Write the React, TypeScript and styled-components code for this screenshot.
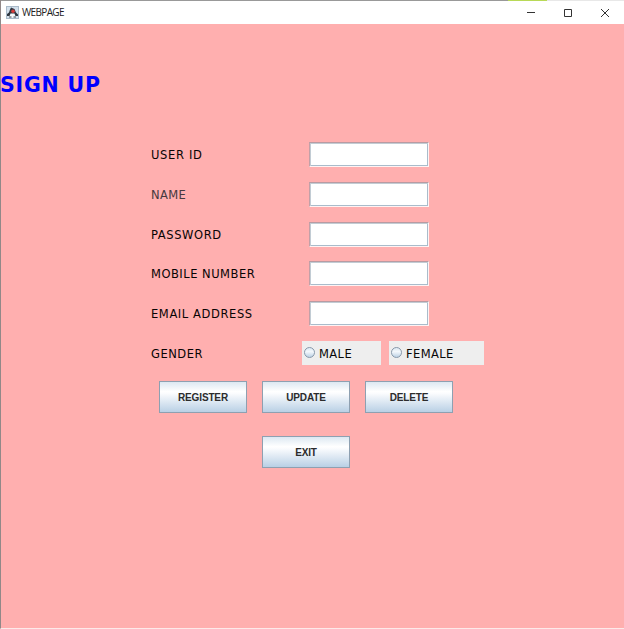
import React from "react";
import styled, { createGlobalStyle } from "styled-components";

const GlobalStyle = createGlobalStyle`
  * { box-sizing: border-box; }
  html, body { margin: 0; padding: 0; overflow: hidden; }
`;

const Window = styled.div`
  display: flex;
  flex-direction: column;
  width: 624px;
  height: 629px;
  border-left: 1px solid #918888;
  border-bottom: 1px solid #fde9e9;
  background: #ffafaf;
`;

const TopEdge = styled.div`
  height: 1px;
  flex: none;
  background: linear-gradient(to right, #999 507px, #b8d957 507px 546px, #e8e8e8 546px);
`;

const TitleBar = styled.header`
  display: flex;
  align-items: center;
  flex: none;
  height: 23px;
  padding-left: 5px;
  background: #fff;
`;

const WindowTitle = styled.span`
  flex: 1;
  padding: 0 0 1px 3px;
  font: 10px/14px "Open Sans", "Noto Sans", sans-serif;
  letter-spacing: -0.65px;
  color: #222;
`;

const WindowButtons = styled.div`
  display: flex;
  gap: 25px;
  padding: 0 13px 0 0;
`;

const Glyph = styled.svg`
  display: block;
  flex: none;
`;

const Heading = styled.h1`
  margin: 47px 0 0 -1px;
  height: 27px;
  font: bold 20.5px/28px "DejaVu Sans", sans-serif;
  letter-spacing: 0.8px;
  color: #00f;
  white-space: nowrap;
`;

const Form = styled.form`
  display: flex;
  flex-direction: column;
  margin-top: 44px;
  padding-left: 150px;
`;

const Row = styled.div<{ $height: number }>`
  display: flex;
  align-items: flex-start;
  height: ${(p) => p.$height}px;
`;

const Label = styled.label<{ $width: number; $spacing: number; $muted?: boolean }>`
  flex: none;
  width: ${(p) => p.$width}px;
  font: 11.5px/27px "DejaVu Sans", sans-serif;
  letter-spacing: ${(p) => p.$spacing}px;
  color: ${(p) => (p.$muted ? "#453a3e" : "#080404")};
  white-space: nowrap;
`;

const TextField = styled.input`
  width: 120px;
  height: 25px;
  padding: 0 4px;
  border: 1px solid;
  border-color: #b99ba2 #fff3f3 #fff3f3 #c3a0a7;
  border-radius: 0;
  outline: none;
  background: #fff;
  box-shadow: inset 1px 1px 0 #c2ccd4, inset -1px -1px 0 #a9bccb;
`;

const RadioOption = styled.label<{ $width: number }>`
  display: flex;
  align-items: center;
  gap: 4px;
  width: ${(p) => p.$width}px;
  height: 24px;
  margin-right: 8px;
  padding-left: 2px;
  background: #eee;
  font: 11.5px/24px "DejaVu Sans", sans-serif;
  letter-spacing: 0.4px;
  color: #080808;
`;

const RadioMark = styled.span`
  width: 11px;
  height: 11px;
  margin-top: -1px;
  border: 1px solid #8798aa;
  border-radius: 50%;
  background: linear-gradient(#dce8f2, #f4f8fc 40%, #bdd2e5);
`;

const RadioText = styled.span`
  padding-top: 2px;
`;

const Buttons = styled.div`
  display: grid;
  grid-template-columns: repeat(3, 88px);
  column-gap: 15px;
  row-gap: 23px;
  padding-left: 8px;
`;

const Button = styled.button<{ $column: number }>`
  grid-column: ${(p) => p.$column};
  height: 32px;
  padding: 1px 0 0;
  border: 1px solid #8ea0b1;
  border-radius: 0;
  background: linear-gradient(#dde8f2 0%, #fff 32%, #fbfcfe 38%, #b9d0e5 100%);
  font: bold 10px/14px "Liberation Sans", Arial, sans-serif;
  letter-spacing: -0.15px;
  color: #2c2c2c;
`;

const fields = [
  { label: "USER ID", spacing: 0.65, height: 40 },
  { label: "NAME", spacing: 0.4, height: 40, muted: true },
  { label: "PASSWORD", spacing: 0.6, height: 39 },
  { label: "MOBILE NUMBER", spacing: 0.5, height: 40 },
  { label: "EMAIL ADDRESS", spacing: 0.6, height: 40 },
];

const actions = [
  { text: "REGISTER", column: 1 },
  { text: "UPDATE", column: 2 },
  { text: "DELETE", column: 3 },
  { text: "EXIT", column: 2 },
];

const JavaIcon = () => (
  <Glyph width="13" height="13" viewBox="0 0 13 13">
    <rect x=".5" y=".5" width="12" height="12" fill="#d3e0ec" stroke="#a9bac9" />
    <path d="M5 1.500 8.500 3l1.500 3.500 2 2v1.500H1V8l2-1.500 1-3z" fill="#2f3842" />
    <path d="M4.500 7.500h4l1.500 4H3z" fill="#f7f9fb" />
    <path d="M3 11h2.500m2 0H10" stroke="#3b444e" />
    <circle cx="7" cy="5.200" r="1.800" fill="#d83a38" />
  </Glyph>
);

const WindowGlyph = ({ d }: { d: string }) => (
  <Glyph width="12" height="12" viewBox="0 0 12 12" fill="none" stroke="#333" strokeWidth="1">
    <path d={d} />
  </Glyph>
);

export default function App() {
  return (
    <>
      <GlobalStyle />
      <Window>
        <TopEdge />
        <TitleBar>
          <JavaIcon />
          <WindowTitle>WEBPAGE</WindowTitle>
          <WindowButtons>
            <WindowGlyph d="M2 5.500h8" />
            <WindowGlyph d="M2.500 2.500h7v7h-7z" />
            <WindowGlyph d="m2 2 8 8m0-8-8 8" />
          </WindowButtons>
        </TitleBar>
        <Heading>SIGN UP</Heading>
        <Form onSubmit={(e) => e.preventDefault()}>
          {fields.map((f) => (
            <Row key={f.label} $height={f.height}>
              <Label $width={158} $spacing={f.spacing} $muted={f.muted}>
                {f.label}
              </Label>
              <TextField aria-label={f.label} />
            </Row>
          ))}
          <Row $height={40}>
            <Label $width={151} $spacing={0.5}>GENDER</Label>
            <RadioOption $width={79}>
              <RadioMark />
              <RadioText>MALE</RadioText>
            </RadioOption>
            <RadioOption $width={95}>
              <RadioMark />
              <RadioText>FEMALE</RadioText>
            </RadioOption>
          </Row>
          <Buttons>
            {actions.map((a) => (
              <Button key={a.text} type="button" $column={a.column}>
                {a.text}
              </Button>
            ))}
          </Buttons>
        </Form>
      </Window>
    </>
  );
}
